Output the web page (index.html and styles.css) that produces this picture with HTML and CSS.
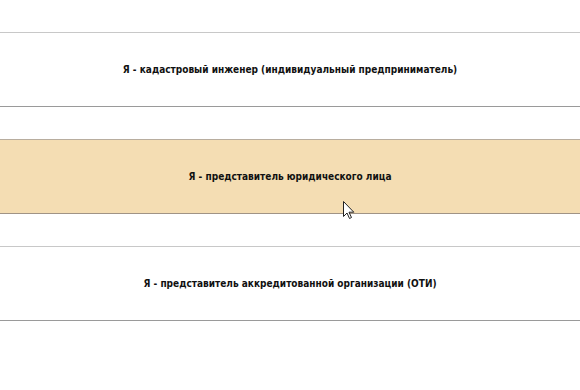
FILE: index.html
```html
<!DOCTYPE html>
<html lang="ru">

<head>
    <meta charset="UTF-8">
    <title>Выбор роли</title>
    <link rel="stylesheet" href="styles.css">
</head>

<body>
    <div class="roles">
        <div class="role">Я - кадастровый инженер (индивидуальный предприниматель)</div>
        <div class="role active">
            Я - представитель юридического лица
            <!-- mouse pointer over the hovered row -->
            <svg class="cursor" width="12" height="19" viewBox="0 0 12 19">
                <path d="M0.5 0.5 L0.5 15.5 L4 12 L6.5 17.5 L8.5 16.5 L6 11.2 L10.8 11.2 Z" fill="#fff" stroke="#222" stroke-width="1" stroke-linejoin="round" />
            </svg>
        </div>
        <div class="role">Я - представитель аккредитованной организации (ОТИ)</div>
    </div>
</body>

</html>
```

FILE: styles.css
```css
html,
body {
    margin: 0;
    padding: 0;
    background: #fff;
}

.roles {
    display: flex;
    flex-direction: column;
    gap: 32px;
    padding-top: 32px;
}

.role {
    position: relative;
    height: 73px;
    display: flex;
    align-items: center;
    justify-content: center;
    border-top: 1px solid #c8c8c8;
    border-bottom: 1px solid #9a9a9a;
    font-family: "DejaVu Sans Condensed", "DejaVu Sans", Verdana, sans-serif;
    font-stretch: condensed;
    font-weight: bold;
    font-size: 10px;
    color: #111;
    cursor: pointer;
}

.active {
    background: #f4ddb3;
    border-top-color: #b8ad9f;
    border-bottom-color: #a09385;
}

.cursor {
    position: absolute;
    left: 343px;
    top: 61px;
}
```
